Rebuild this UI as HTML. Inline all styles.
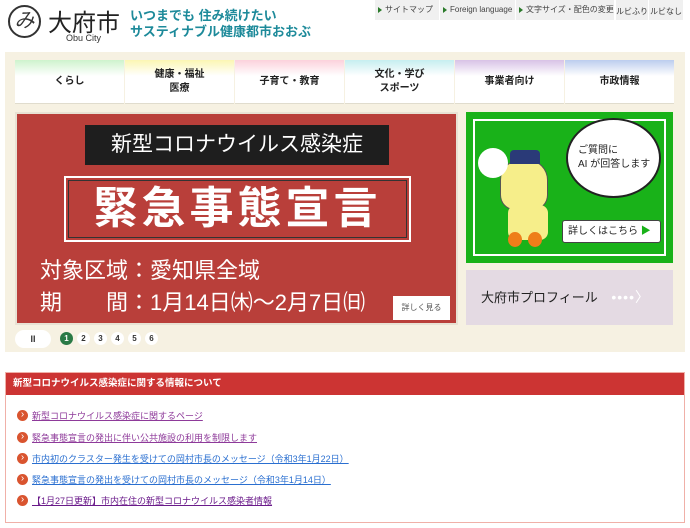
<!DOCTYPE html>
<html><head><meta charset="utf-8"><style>
*{margin:0;padding:0;box-sizing:border-box}
body{width:690px;height:528px;background:#fff;font-family:"Liberation Sans","Noto Sans CJK JP",sans-serif;position:relative;overflow:hidden;color:#333}
.a{position:absolute}
.top{background:#f0f0f0;font-size:8px;color:#444;height:20px;top:0;line-height:20px;padding-left:10px}
.top:before{content:"";position:absolute;left:3px;top:7px;border-left:4px solid #2a7a2a;border-top:3px solid transparent;border-bottom:3px solid transparent}
.tab{top:60px;height:43px;width:109px;background:#fff;font-size:10px;font-weight:bold;text-align:center;display:flex;align-items:center;justify-content:center;line-height:14px;color:#222;overflow:hidden;box-shadow:0 1px 0 #e0dccd}
.tab i{position:absolute;left:0;top:0;width:100%;height:16px}
.tab span{position:relative}
.lk{position:absolute;left:17px;font-size:9px;text-decoration:underline;color:#8e3a9a}
.lk:before{content:"›";position:absolute;left:0;top:1px;width:11px;height:11px;border-radius:50%;background:#d9542f;color:#fff;font-size:10px;line-height:10px;text-align:center;text-decoration:none}
.lk b{font-weight:normal;margin-left:15px}
.dot{top:332px;width:13px;height:13px;border-radius:50%;background:#fff;font-size:8px;font-weight:bold;text-align:center;line-height:13px}
</style></head><body>
<div class="a" style="left:8px;top:5px;width:33px;height:33px;border:2px solid #333;border-radius:50%;font-size:20px;text-align:center;line-height:28px;font-style:italic">み</div>
<div class="a" style="left:48px;top:3px;font-size:24px;color:#222">大府市</div>
<div class="a" style="left:66px;top:33px;font-size:9px">Obu City</div>
<div class="a" style="left:130px;top:8px;font-size:13px;font-weight:bold;color:#1d8a9a;line-height:16px">いつまでも 住み続けたい<br>サスティナブル健康都市おおぶ</div>
<div class="a top" style="left:375px;width:64px">サイトマップ</div>
<div class="a top" style="left:440px;width:75px">Foreign language</div>
<div class="a top" style="left:516px;width:98px">文字サイズ・配色の変更</div>
<div class="a" style="left:616px;top:0;width:32px;height:20px;background:#f0f0f0;font-size:8px;text-align:center;padding-top:6px">ルビふり</div>
<div class="a" style="left:649px;top:0;width:34px;height:20px;background:#f0f0f0;font-size:8px;text-align:center;padding-top:6px">ルビなし</div>
<div class="a" style="left:5px;top:52px;width:680px;height:300px;background:#f6f1e2"></div>
<div class="a tab" style="left:15px"><i style="background:linear-gradient(#cef3cd,#fff)"></i><span>くらし</span></div>
<div class="a tab" style="left:125px"><i style="background:linear-gradient(#fbf6b3,#fff)"></i><span>健康・福祉<br>医療</span></div>
<div class="a tab" style="left:235px"><i style="background:linear-gradient(#fcd2dc,#fff)"></i><span>子育て・教育</span></div>
<div class="a tab" style="left:345px"><i style="background:linear-gradient(#c6eef0,#fff)"></i><span>文化・学び<br>スポーツ</span></div>
<div class="a tab" style="left:455px"><i style="background:linear-gradient(#d8c2e6,#fff)"></i><span>事業者向け</span></div>
<div class="a tab" style="left:565px"><i style="background:linear-gradient(#bccdee,#fff)"></i><span>市政情報</span></div>
<div class="a" style="left:15px;top:112px;width:443px;height:213px;background:#b93f3a;border:2px solid #e8e2d4"></div>
<div class="a" style="left:85px;top:125px;width:304px;height:40px;background:#1e1e1e;color:#fff;font-size:21px;text-align:center;line-height:40px">新型コロナウイルス感染症</div>
<div class="a" style="left:64px;top:176px;width:347px;height:66px;border:2px solid #fff;outline:1px solid #333;outline-offset:-5px;color:#fff;font-size:44px;font-weight:bold;text-align:center;line-height:62px;letter-spacing:4px">緊急事態宣言</div>
<div class="a" style="left:40px;top:253px;font-size:22px;color:#fff">対象区域：愛知県全域</div>
<div class="a" style="left:40px;top:285px;font-size:22px;color:#fff;white-space:nowrap">期　　間：1月14日㈭〜2月7日㈰</div>
<div class="a" style="left:393px;top:296px;width:57px;height:24px;background:#fff;font-size:8px;color:#555;text-align:center;line-height:24px">詳しく見る</div>
<div class="a" style="left:466px;top:112px;width:207px;height:151px;background:#19b219"></div>
<div class="a" style="left:473px;top:119px;width:193px;height:137px;border:2px solid #fff"></div>
<div class="a" style="left:566px;top:118px;width:95px;height:80px;background:#fff;border:2px solid #222;border-radius:50%;font-size:10px;color:#222;padding:24px 0 0 10px;line-height:14px">ご質問に<br>AI が回答します</div>
<div class="a" style="left:500px;top:160px;width:48px;height:50px;background:#f6ee8a;border:1px solid #555;border-radius:40% 40% 30% 30%"></div>
<div class="a" style="left:478px;top:148px;width:30px;height:30px;background:#fff;border-radius:50%"></div>
<div class="a" style="left:510px;top:150px;width:30px;height:14px;background:#2a3a78;border-radius:4px 4px 0 0"></div>
<div class="a" style="left:508px;top:205px;width:40px;height:35px;background:#f6ee8a;border-radius:8px"></div>
<div class="a" style="left:508px;top:232px;width:14px;height:15px;background:#ee7e1a;border-radius:50%"></div>
<div class="a" style="left:528px;top:232px;width:14px;height:15px;background:#ee7e1a;border-radius:50%"></div>
<div class="a" style="left:562px;top:220px;width:99px;height:23px;background:#fff;border:1px solid #444;border-radius:3px;font-size:10px;color:#222;line-height:21px;padding-left:5px">詳しくはこちら <span style="color:#19b219">▶</span></div>
<div class="a" style="left:466px;top:270px;width:207px;height:55px;background:#e4dae3;font-size:13px;color:#222;line-height:55px;padding-left:15px">大府市プロフィール <span style="color:#fff;font-size:14px;margin-left:10px;letter-spacing:1px">••••〉</span></div>
<div class="a" style="left:15px;top:330px;width:36px;height:18px;background:#fff;border-radius:9px;font-size:9px;font-weight:bold;text-align:center;line-height:18px">II</div>
<div class="a dot" style="left:60px;background:#2a7a46;color:#fff">1</div>
<div class="a dot" style="left:77px">2</div>
<div class="a dot" style="left:94px">3</div>
<div class="a dot" style="left:111px">4</div>
<div class="a dot" style="left:128px">5</div>
<div class="a dot" style="left:145px">6</div>
<div class="a" style="left:5px;top:372px;width:680px;height:151px;border:1px solid #f0b0a8"></div>
<div class="a" style="left:6px;top:373px;width:678px;height:22px;background:#cc3433;color:#fff;font-size:9.5px;font-weight:bold;line-height:22px;padding-left:7px">新型コロナウイルス感染症に関する情報について</div>
<div class="lk" style="top:409px"><b>新型コロナウイルス感染症に関するページ</b></div>
<div class="lk" style="top:431px"><b>緊急事態宣言の発出に伴い公共施設の利用を制限します</b></div>
<div class="lk" style="top:452px;color:#2a6fd0"><b>市内初のクラスター発生を受けての岡村市長のメッセージ（令和3年1月22日）</b></div>
<div class="lk" style="top:473px;color:#2a6fd0"><b>緊急事態宣言の発出を受けての岡村市長のメッセージ（令和3年1月14日）</b></div>
<div class="lk" style="top:494px;color:#6a1a8a"><b>【1月27日更新】市内在住の新型コロナウイルス感染者情報</b></div>
</body></html>
